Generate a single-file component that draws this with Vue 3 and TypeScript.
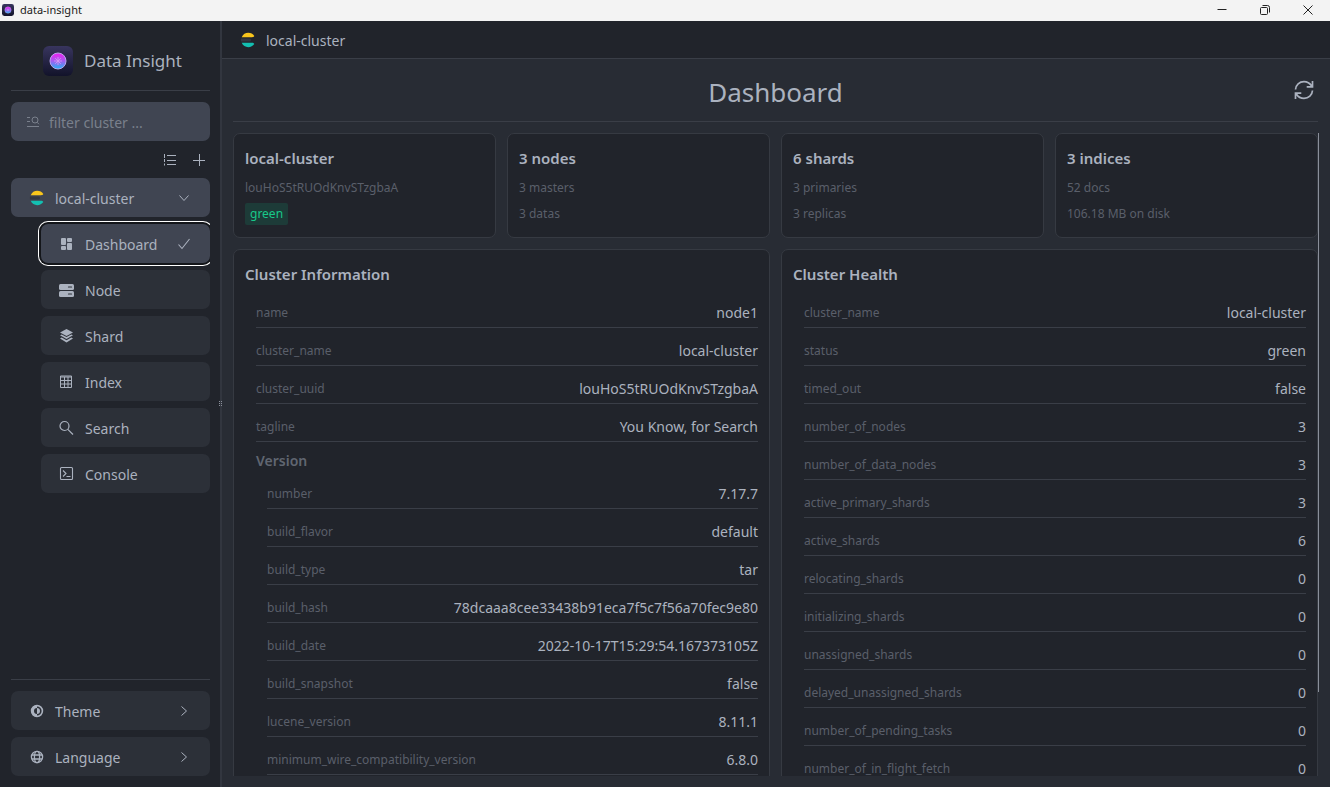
<script setup lang="ts">
import { ref } from 'vue'

interface Row {
  label: string
  value: string
}

interface NavItem {
  id: string
  label: string
}

const filter = ref('')
const active = ref('dashboard')

const navItems: NavItem[] = [
  { id: 'dashboard', label: 'Dashboard' },
  { id: 'node', label: 'Node' },
  { id: 'shard', label: 'Shard' },
  { id: 'index', label: 'Index' },
  { id: 'search', label: 'Search' },
  { id: 'console', label: 'Console' },
]

const summaries = [
  { title: '3 nodes', lines: ['3 masters', '3 datas'] },
  { title: '6 shards', lines: ['3 primaries', '3 replicas'] },
  { title: '3 indices', lines: ['52 docs', '106.18 MB on disk'] },
]

const info: Row[] = [
  { label: 'name', value: 'node1' },
  { label: 'cluster_name', value: 'local-cluster' },
  { label: 'cluster_uuid', value: 'louHoS5tRUOdKnvSTzgbaA' },
  { label: 'tagline', value: 'You Know, for Search' },
]

const version: Row[] = [
  { label: 'number', value: '7.17.7' },
  { label: 'build_flavor', value: 'default' },
  { label: 'build_type', value: 'tar' },
  { label: 'build_hash', value: '78dcaaa8cee33438b91eca7f5c7f56a70fec9e80' },
  { label: 'build_date', value: '2022-10-17T15:29:54.167373105Z' },
  { label: 'build_snapshot', value: 'false' },
  { label: 'lucene_version', value: '8.11.1' },
  { label: 'minimum_wire_compatibility_version', value: '6.8.0' },
]

const health: Row[] = [
  { label: 'cluster_name', value: 'local-cluster' },
  { label: 'status', value: 'green' },
  { label: 'timed_out', value: 'false' },
  { label: 'number_of_nodes', value: '3' },
  { label: 'number_of_data_nodes', value: '3' },
  { label: 'active_primary_shards', value: '3' },
  { label: 'active_shards', value: '6' },
  { label: 'relocating_shards', value: '0' },
  { label: 'initializing_shards', value: '0' },
  { label: 'unassigned_shards', value: '0' },
  { label: 'delayed_unassigned_shards', value: '0' },
  { label: 'number_of_pending_tasks', value: '0' },
  { label: 'number_of_in_flight_fetch', value: '0' },
]
</script>

<template>
  <div class="window">
    <svg class="defs" width="0" height="0" aria-hidden="true">
      <defs>
        <linearGradient id="orb" x1="0" y1="0" x2="0" y2="1">
          <stop offset="0" stop-color="#f01cf0" />
          <stop offset="0.5" stop-color="#a45cf0" />
          <stop offset="1" stop-color="#22b4f4" />
        </linearGradient>
        <linearGradient id="tile" x1="0" y1="0" x2="0" y2="1">
          <stop offset="0" stop-color="#38355e" />
          <stop offset="1" stop-color="#12132a" />
        </linearGradient>
        <symbol id="app-logo" viewBox="0 0 30 30">
          <rect width="30" height="30" rx="6" fill="url(#tile)" />
          <circle cx="15" cy="15" r="8" fill="url(#orb)" stroke="#b9a4ee" stroke-width="1" />
          <path d="M15 11v8M11 15h8M12.200 12.200l5.600 5.600M17.800 12.200l-5.600 5.600" stroke="#d79af5" stroke-width="0.800" fill="none" />
        </symbol>
        <symbol id="elastic" viewBox="0 0 16 16">
          <path d="M1.700 5.200C3 2.300 5.400 .8 8.200 .8c2.600 0 4.700 1.200 6.100 3.200-.5.800-1.100 1.200-2.200 1.200z" fill="#f9c51c" />
          <path d="M1 6.500h8.500a1.500 1.500 0 0 1 0 3H1a8 8 0 0 1 0-3z" fill="#343741" />
          <path d="M1.700 10.800h10.400c1.100 0 1.700.4 2.200 1.200-1.400 2-3.500 3.200-6.100 3.200-2.800 0-5.200-1.500-6.500-4.400z" fill="#13bfb1" />
        </symbol>
      </defs>
    </svg>

    <div class="titlebar">
      <svg class="title-logo" width="12" height="12"><use href="#app-logo" /></svg>
      <span class="title-text">data-insight</span>
      <button class="win-btn" type="button" aria-label="Minimize">
        <svg width="12" height="12" viewBox="0 0 12 12"><path d="M1.500 5.500h9" stroke="#222" fill="none" /></svg>
      </button>
      <button class="win-btn" type="button" aria-label="Restore">
        <svg width="12" height="12" viewBox="0 0 12 12"><g stroke="#222" fill="none"><rect x="1.500" y="3.500" width="7" height="7" rx="1" /><path d="M3.500 1.500h5a2 2 0 0 1 2 2v5" /></g></svg>
      </button>
      <button class="win-btn" type="button" aria-label="Close">
        <svg width="12" height="12" viewBox="0 0 12 12"><path d="M1.500 1.500l9 9M10.500 1.500l-9 9" stroke="#222" fill="none" /></svg>
      </button>
    </div>

    <div class="body">
      <aside class="sidebar">
        <div class="brand">
          <svg width="30" height="30"><use href="#app-logo" /></svg>
          <span>Data Insight</span>
        </div>

        <label class="filter">
          <svg width="14" height="14" viewBox="0 0 14 14" fill="none" stroke="currentColor" stroke-width="1" aria-hidden="true">
            <path d="M1 2.500h3M1 6.500h3M1 11.500h12" />
            <circle cx="9" cy="5" r="3" />
            <path d="M11 7.200l2 2" />
          </svg>
          <input v-model="filter" type="text" placeholder="filter cluster ..." aria-label="filter cluster" />
        </label>

        <div class="tools">
          <button type="button" aria-label="List">
            <svg width="14" height="14" viewBox="0 0 14 14" fill="none" stroke="currentColor"><path d="M4 2.500h9M4 7.500h9M4 11.500h9" /><path d="M1.500 1v3M1.500 6v2M1.500 10.500v2M1 8.500h1M1 4.500h1" /></svg>
          </button>
          <button type="button" aria-label="Add">
            <svg width="14" height="14" viewBox="0 0 14 14" fill="none" stroke="currentColor"><path d="M7.500 1v12M1 7.500h12" /></svg>
          </button>
        </div>

        <nav class="tree">
          <button class="item cluster" type="button" aria-expanded="true">
            <svg class="glyph" width="16" height="16"><use href="#elastic" /></svg>
            <span class="label">local-cluster</span>
            <svg class="tail" width="12" height="12" viewBox="0 0 12 12" fill="none" stroke="currentColor"><path d="M1.500 3.500L6 8.500l4.500-5" /></svg>
          </button>
          <button
            v-for="item in navItems"
            :key="item.id"
            class="item sub"
            :class="{ active: active === item.id }"
            type="button"
            @click="active = item.id"
          >
            <svg v-if="item.id === 'dashboard'" class="glyph" width="16" height="16" viewBox="0 0 16 16" fill="currentColor">
              <rect x="2" y="2" width="5" height="7" rx="1" /><rect x="2" y="10" width="5" height="4" rx="1" />
              <rect x="8" y="2" width="5" height="4" rx="1" /><rect x="8" y="7" width="5" height="7" rx="1" />
            </svg>
            <svg v-else-if="item.id === 'node'" class="glyph" width="16" height="16" viewBox="0 0 16 16">
              <rect x="0" y="2" width="15" height="6" rx="1.500" fill="currentColor" /><rect x="0" y="9" width="15" height="6" rx="1.500" fill="currentColor" />
              <path d="M9.500 5h3M9.500 12h3" stroke="#2c3038" stroke-width="1.200" stroke-linecap="round" />
            </svg>
            <svg v-else-if="item.id === 'shard'" class="glyph" width="16" height="16" viewBox="0 0 16 16" fill="currentColor">
              <path d="M7.500 1l6.500 3.500L7.500 8 1 4.500z" /><path d="M1 7.300l1.700-.9L7.500 9l4.800-2.600 1.700.9L7.500 11z" /><path d="M1 10.500l1.700-.9 4.800 2.600 4.800-2.600 1.700.9-6.500 4z" />
            </svg>
            <svg v-else-if="item.id === 'index'" class="glyph" width="16" height="16" viewBox="0 0 16 16" fill="none" stroke="currentColor">
              <path d="M1.500 2h11v11.500h-11zM1.500 3h11M1.500 6.500h11M1.500 10h11M5.500 3v10M9 3v10" />
            </svg>
            <svg v-else-if="item.id === 'search'" class="glyph" width="16" height="16" viewBox="0 0 16 16" fill="none" stroke="currentColor" stroke-width="1.200">
              <circle cx="5.500" cy="6" r="4.500" /><path d="M8.800 9.300l5.200 5.200" />
            </svg>
            <svg v-else class="glyph" width="16" height="16" viewBox="0 0 16 16" fill="none" stroke="currentColor" stroke-width="1.100">
              <rect x="1.500" y="1.500" width="12" height="12" rx="1" /><path d="M4 4.500l3 3-3 3M7.500 10.500h4" />
            </svg>
            <span class="label">{{ item.label }}</span>
            <svg v-if="active === item.id" class="tail" width="12" height="12" viewBox="0 0 12 12" fill="none" stroke="currentColor" stroke-width="1.100"><path d="M.5 6.500L4 10.500 11.500 1" /></svg>
          </button>
        </nav>

        <div class="settings">
          <button class="item" type="button">
            <svg class="glyph" width="14" height="14" viewBox="0 0 14 14">
              <circle cx="7" cy="7" r="5.400" fill="none" stroke="currentColor" stroke-width="1.600" />
              <path fill="currentColor" d="M7 1.200v2.800a3 3 0 0 0 0 6v2.800a5.800 5.800 0 0 1 0-11.600zM7 4a3 3 0 0 1 0 6z" />
            </svg>
            <span class="label">Theme</span>
            <svg class="tail" width="12" height="12" viewBox="0 0 12 12" fill="none" stroke="currentColor"><path d="M3.500 1.500L8.500 6l-5 4.500" /></svg>
          </button>
          <button class="item" type="button">
            <svg class="glyph" width="14" height="14" viewBox="0 0 14 14" fill="none" stroke="currentColor" stroke-width="1.300">
              <circle cx="7" cy="7" r="5.600" /><ellipse cx="7" cy="7" rx="2.600" ry="5.600" /><path d="M1.800 5h10.400M1.800 9h10.400" />
            </svg>
            <span class="label">Language</span>
            <svg class="tail" width="12" height="12" viewBox="0 0 12 12" fill="none" stroke="currentColor"><path d="M3.500 1.500L8.500 6l-5 4.500" /></svg>
          </button>
        </div>

        <div class="grip" aria-hidden="true">
          <svg width="4" height="6" viewBox="0 0 4 6" fill="#8a8f9a"><path d="M0 0h1v1H0zM2 0h1v1H2zM0 2h1v1H0zM2 2h1v1H2zM0 4h1v1H0zM2 4h1v1H2z" /></svg>
        </div>
      </aside>

      <div class="content">
        <header class="topbar">
          <svg width="16" height="16"><use href="#elastic" /></svg>
          <span class="topbar-name">local-cluster</span>
        </header>

        <main class="page">
          <div class="page-head">
            <h1>Dashboard</h1>
            <button class="refresh" type="button" aria-label="Refresh">
              <svg width="20" height="20" viewBox="0 0 20 20" fill="none" stroke="currentColor" stroke-width="1.700">
                <path d="M1.500 9.500C1.800 4.800 5.400 1.600 10 1.600c3.200 0 5.800 1.500 7.500 4.200M18.500 1v5.800h-5.800" />
                <path d="M18.500 10.500c-.3 4.700-3.900 7.900-8.500 7.900-3.200 0-5.800-1.500-7.500-4.200M1.500 19v-5.800h5.800" />
              </svg>
            </button>
          </div>

          <div class="scroll-wrap">
            <div class="scroll">
              <div class="summary">
                <section class="card">
                  <h2>local-cluster</h2>
                  <p>louHoS5tRUOdKnvSTzgbaA</p>
                  <p><span class="badge">green</span></p>
                </section>
                <section v-for="card in summaries" :key="card.title" class="card">
                  <h2>{{ card.title }}</h2>
                  <p v-for="line in card.lines" :key="line">{{ line }}</p>
                </section>
              </div>

              <div class="details">
                <section class="card">
                  <h2>Cluster Information</h2>
                  <dl class="rows">
                    <div v-for="row in info" :key="row.label" class="row">
                      <dt>{{ row.label }}</dt>
                      <dd>{{ row.value }}</dd>
                    </div>
                  </dl>
                  <div class="group">
                    <h3>Version</h3>
                    <dl class="rows">
                      <div v-for="row in version" :key="row.label" class="row">
                        <dt>{{ row.label }}</dt>
                        <dd>{{ row.value }}</dd>
                      </div>
                    </dl>
                  </div>
                </section>
                <section class="card">
                  <h2>Cluster Health</h2>
                  <dl class="rows">
                    <div v-for="row in health" :key="row.label" class="row">
                      <dt>{{ row.label }}</dt>
                      <dd>{{ row.value }}</dd>
                    </div>
                  </dl>
                </section>
              </div>
            </div>
            <div class="thumb" aria-hidden="true"></div>
          </div>
        </main>
      </div>
    </div>
  </div>
</template>

<style>
body {
  margin: 0;
  background: #282c34;
}
</style>

<style scoped>
* {
  box-sizing: border-box;
}
button {
  margin: 0;
  padding: 0;
  border: 0;
  background: none;
  color: inherit;
  font: inherit;
  cursor: pointer;
}
svg {
  display: block;
  flex: none;
}
.defs {
  position: absolute;
}
.window {
  display: flex;
  flex-direction: column;
  height: 100vh;
  overflow: hidden;
  background: #282c34;
  color: #abb2bf;
  font-family: "Noto Sans", "Open Sans", sans-serif;
  font-size: 14px;
  line-height: 22px;
}
.titlebar {
  display: flex;
  flex: none;
  align-items: center;
  height: 21px;
  padding: 0 1px 1px 2px;
  background: #f3f3f3;
  color: #1a1a1a;
  font-size: 11px;
}
.title-text {
  flex: 1;
  margin-left: 6px;
}
.win-btn {
  display: flex;
  align-items: center;
  justify-content: center;
  width: 43px;
  height: 20px;
}
.body {
  display: flex;
  flex: 1;
  min-height: 0;
}
.sidebar {
  position: relative;
  display: flex;
  flex: none;
  flex-direction: column;
  width: 222px;
  padding: 0 10px 11px 11px;
  border-right: 2px solid #32363f;
  background: #21242b;
}
.brand {
  display: flex;
  flex: none;
  align-items: center;
  justify-content: center;
  gap: 11px;
  height: 70px;
  padding: 11px 0 0 4px;
  border-bottom: 1px solid #3a3e47;
  font-size: 17px;
}
.filter {
  display: flex;
  flex: none;
  align-items: center;
  gap: 9px;
  height: 39px;
  margin-top: 11px;
  padding: 0 15px;
  border-radius: 7px;
  background: #404552;
  color: #7a808c;
}
.filter input {
  flex: 1;
  min-width: 0;
  padding: 2px 0 0;
  border: 0;
  outline: 0;
  background: none;
  color: #abb2bf;
  font: inherit;
}
.filter input::placeholder {
  color: #7a808c;
  opacity: 1;
}
.tools {
  display: flex;
  flex: none;
  align-items: center;
  justify-content: flex-end;
  gap: 15px;
  height: 37px;
  padding-right: 4px;
}
.tree {
  display: flex;
  flex: 1;
  flex-direction: column;
  gap: 7px;
  min-height: 0;
  overflow: hidden;
}
.item {
  display: flex;
  flex: none;
  align-items: center;
  height: 39px;
  padding: 0 20px;
  border-radius: 7px;
  background: #2c3038;
  text-align: left;
}
.label {
  flex: 1;
  margin-left: 10px;
  padding-top: 2px;
}
.settings .item {
  padding-left: 19px;
}
.settings .label {
  margin-left: 11px;
}
.cluster {
  padding-left: 18px;
  background: #404552;
}
.sub {
  margin-left: 30px;
  padding-left: 18px;
}
.sub.active {
  background: #404552;
  box-shadow: 0 0 0 2px #14161a, 0 0 0 3px #fff;
}
.settings {
  display: flex;
  flex: none;
  flex-direction: column;
  gap: 7px;
  padding-top: 11px;
  border-top: 1px solid #3a3e47;
}
.grip {
  position: absolute;
  top: 50%;
  right: -3px;
  transform: translateY(-50%);
}
.content {
  display: flex;
  flex: 1;
  flex-direction: column;
  min-width: 0;
}
.topbar {
  display: flex;
  flex: none;
  align-items: center;
  gap: 10px;
  height: 38px;
  padding-left: 18px;
  border-bottom: 1px solid #3a3e47;
  background: #21242b;
}
.topbar-name {
  padding-top: 2px;
}
.page {
  display: flex;
  flex: 1;
  flex-direction: column;
  min-height: 0;
  padding: 0 12px 11px 11px;
}
.page-head {
  display: grid;
  flex: none;
  grid-template-columns: 1fr auto 1fr;
  align-items: center;
  height: 63px;
  border-bottom: 1px solid #3a3e47;
}
.page-head h1 {
  grid-column: 2;
  margin: 0;
  padding-top: 3px;
  font-size: 26px;
  font-weight: 400;
  line-height: 36px;
}
.refresh {
  justify-self: end;
  margin-right: 4px;
}
.scroll-wrap {
  position: relative;
  flex: 1;
  min-height: 0;
  margin-top: 11px;
}
.scroll {
  height: 100%;
  overflow: hidden;
}
.thumb {
  position: absolute;
  top: 0;
  right: -1px;
  width: 1px;
  height: 87%;
  background: #8a8f9a;
}
.summary {
  display: grid;
  grid-template-columns: repeat(4, 1fr);
  gap: 11px;
}
.details {
  display: grid;
  grid-template-columns: repeat(2, 1fr);
  gap: 11px;
  margin-top: 11px;
}
.card {
  min-width: 0;
  padding: 11px 11px 10px;
  border: 1px solid #363a42;
  border-radius: 7px;
  background: #21242b;
}
.card h2 {
  margin: 0 0 4px;
  font-size: 15px;
  font-weight: 600;
  line-height: 26px;
}
.details h2 {
  margin-bottom: 3px;
}
.card p {
  margin: 0;
  color: #5a5f6a;
  font-size: 12px;
  line-height: 26px;
}
.badge {
  display: inline-block;
  padding: 0 5px;
  border-radius: 2px;
  background: #1d3b38;
  color: #18c98a;
  line-height: 22px;
}
.rows {
  margin: 0 0 0 11px;
}
.row {
  display: flex;
  justify-content: space-between;
  padding: 12px 0 3px;
  border-bottom: 1px solid #3a3e47;
}
.row dt {
  color: #5a5f6a;
  font-size: 12px;
}
.row dd {
  margin: 0;
}
.group {
  margin-left: 11px;
}
.group h3 {
  margin: 0;
  padding-top: 8px;
  color: #606671;
  font-size: 14px;
  font-weight: 600;
  line-height: 21px;
}
</style>
